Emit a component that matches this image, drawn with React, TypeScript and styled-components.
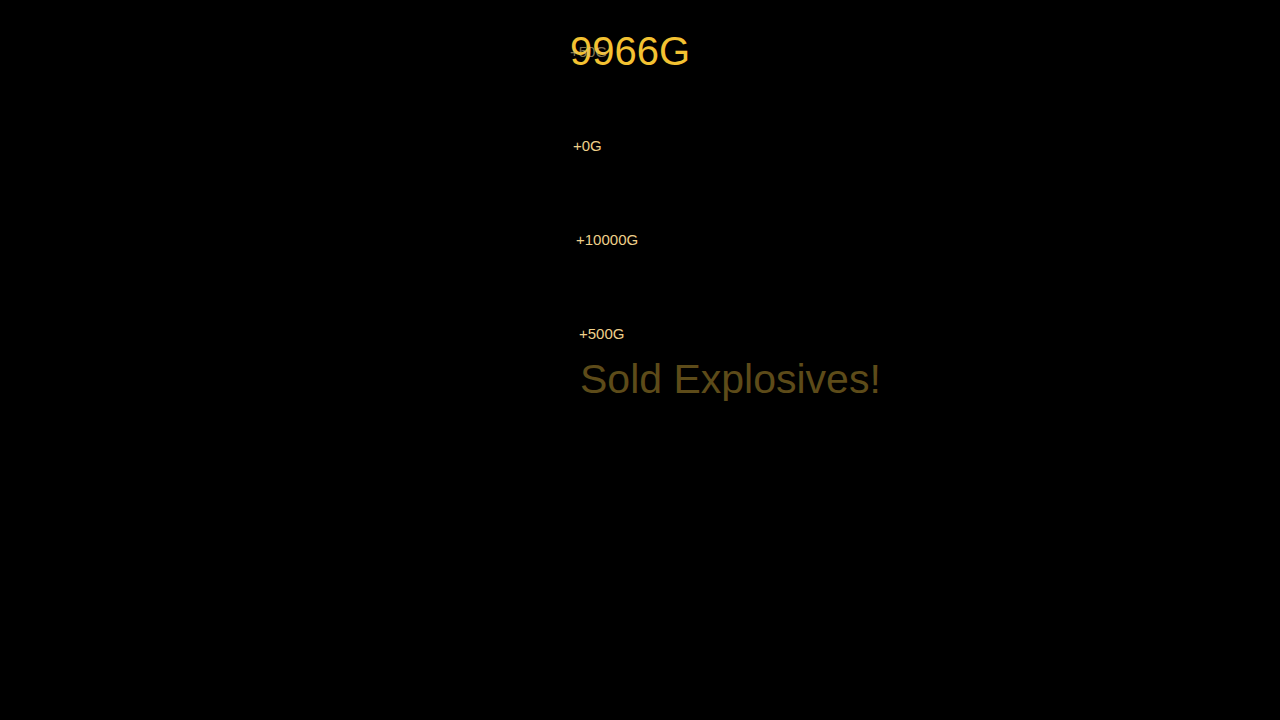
import React from "react";
import styled, { createGlobalStyle } from "styled-components";

const GlobalStyle = createGlobalStyle`
  html, body {
    margin: 0;
    padding: 0;
    background: #000;
    height: 100%;
  }
  body {
    font-family: "Liberation Sans", Arial, sans-serif;
  }
`;

const Stage = styled.div`
  width: 1280px;
  height: 720px;
  background: #000;
  display: flex;
  flex-direction: column;
  align-items: flex-start;
  padding: 27px 0 0 570px;
  box-sizing: border-box;
  overflow: hidden;
`;

const Counter = styled.div`
  position: relative;
  font-size: 40px;
  line-height: 48px;
  color: #f3c232;
`;

const CounterPop = styled.span`
  position: absolute;
  left: 0;
  top: 16px;
  font-size: 15px;
  line-height: 17px;
  color: #d9c48a;
  opacity: 0.6;
  white-space: nowrap;
`;

const PopList = styled.div`
  display: flex;
  flex-direction: column;
  gap: 77px;
  margin-top: 62px;
`;

const Pop = styled.div<{ $shift: number }>`
  font-size: 15px;
  line-height: 17px;
  color: #efd08a;
  margin-left: ${(p) => p.$shift}px;
`;

const Message = styled.div`
  margin: 13px 0 0 10px;
  font-size: 41px;
  line-height: 48px;
  color: #5d4b19;
`;

const pops = [
  { text: "+0G", shift: 3 },
  { text: "+10000G", shift: 6 },
  { text: "+500G", shift: 9 },
];

const App: React.FC = () => {
  return (
    <>
      <GlobalStyle />
      <Stage>
        <Counter>
          9966G
          <CounterPop>+50G</CounterPop>
        </Counter>
        <PopList>
          {pops.map((p, i) => (
            <Pop key={i} $shift={p.shift}>
              {p.text}
            </Pop>
          ))}
        </PopList>
        <Message>Sold Explosives!</Message>
      </Stage>
    </>
  );
};

export default App;
